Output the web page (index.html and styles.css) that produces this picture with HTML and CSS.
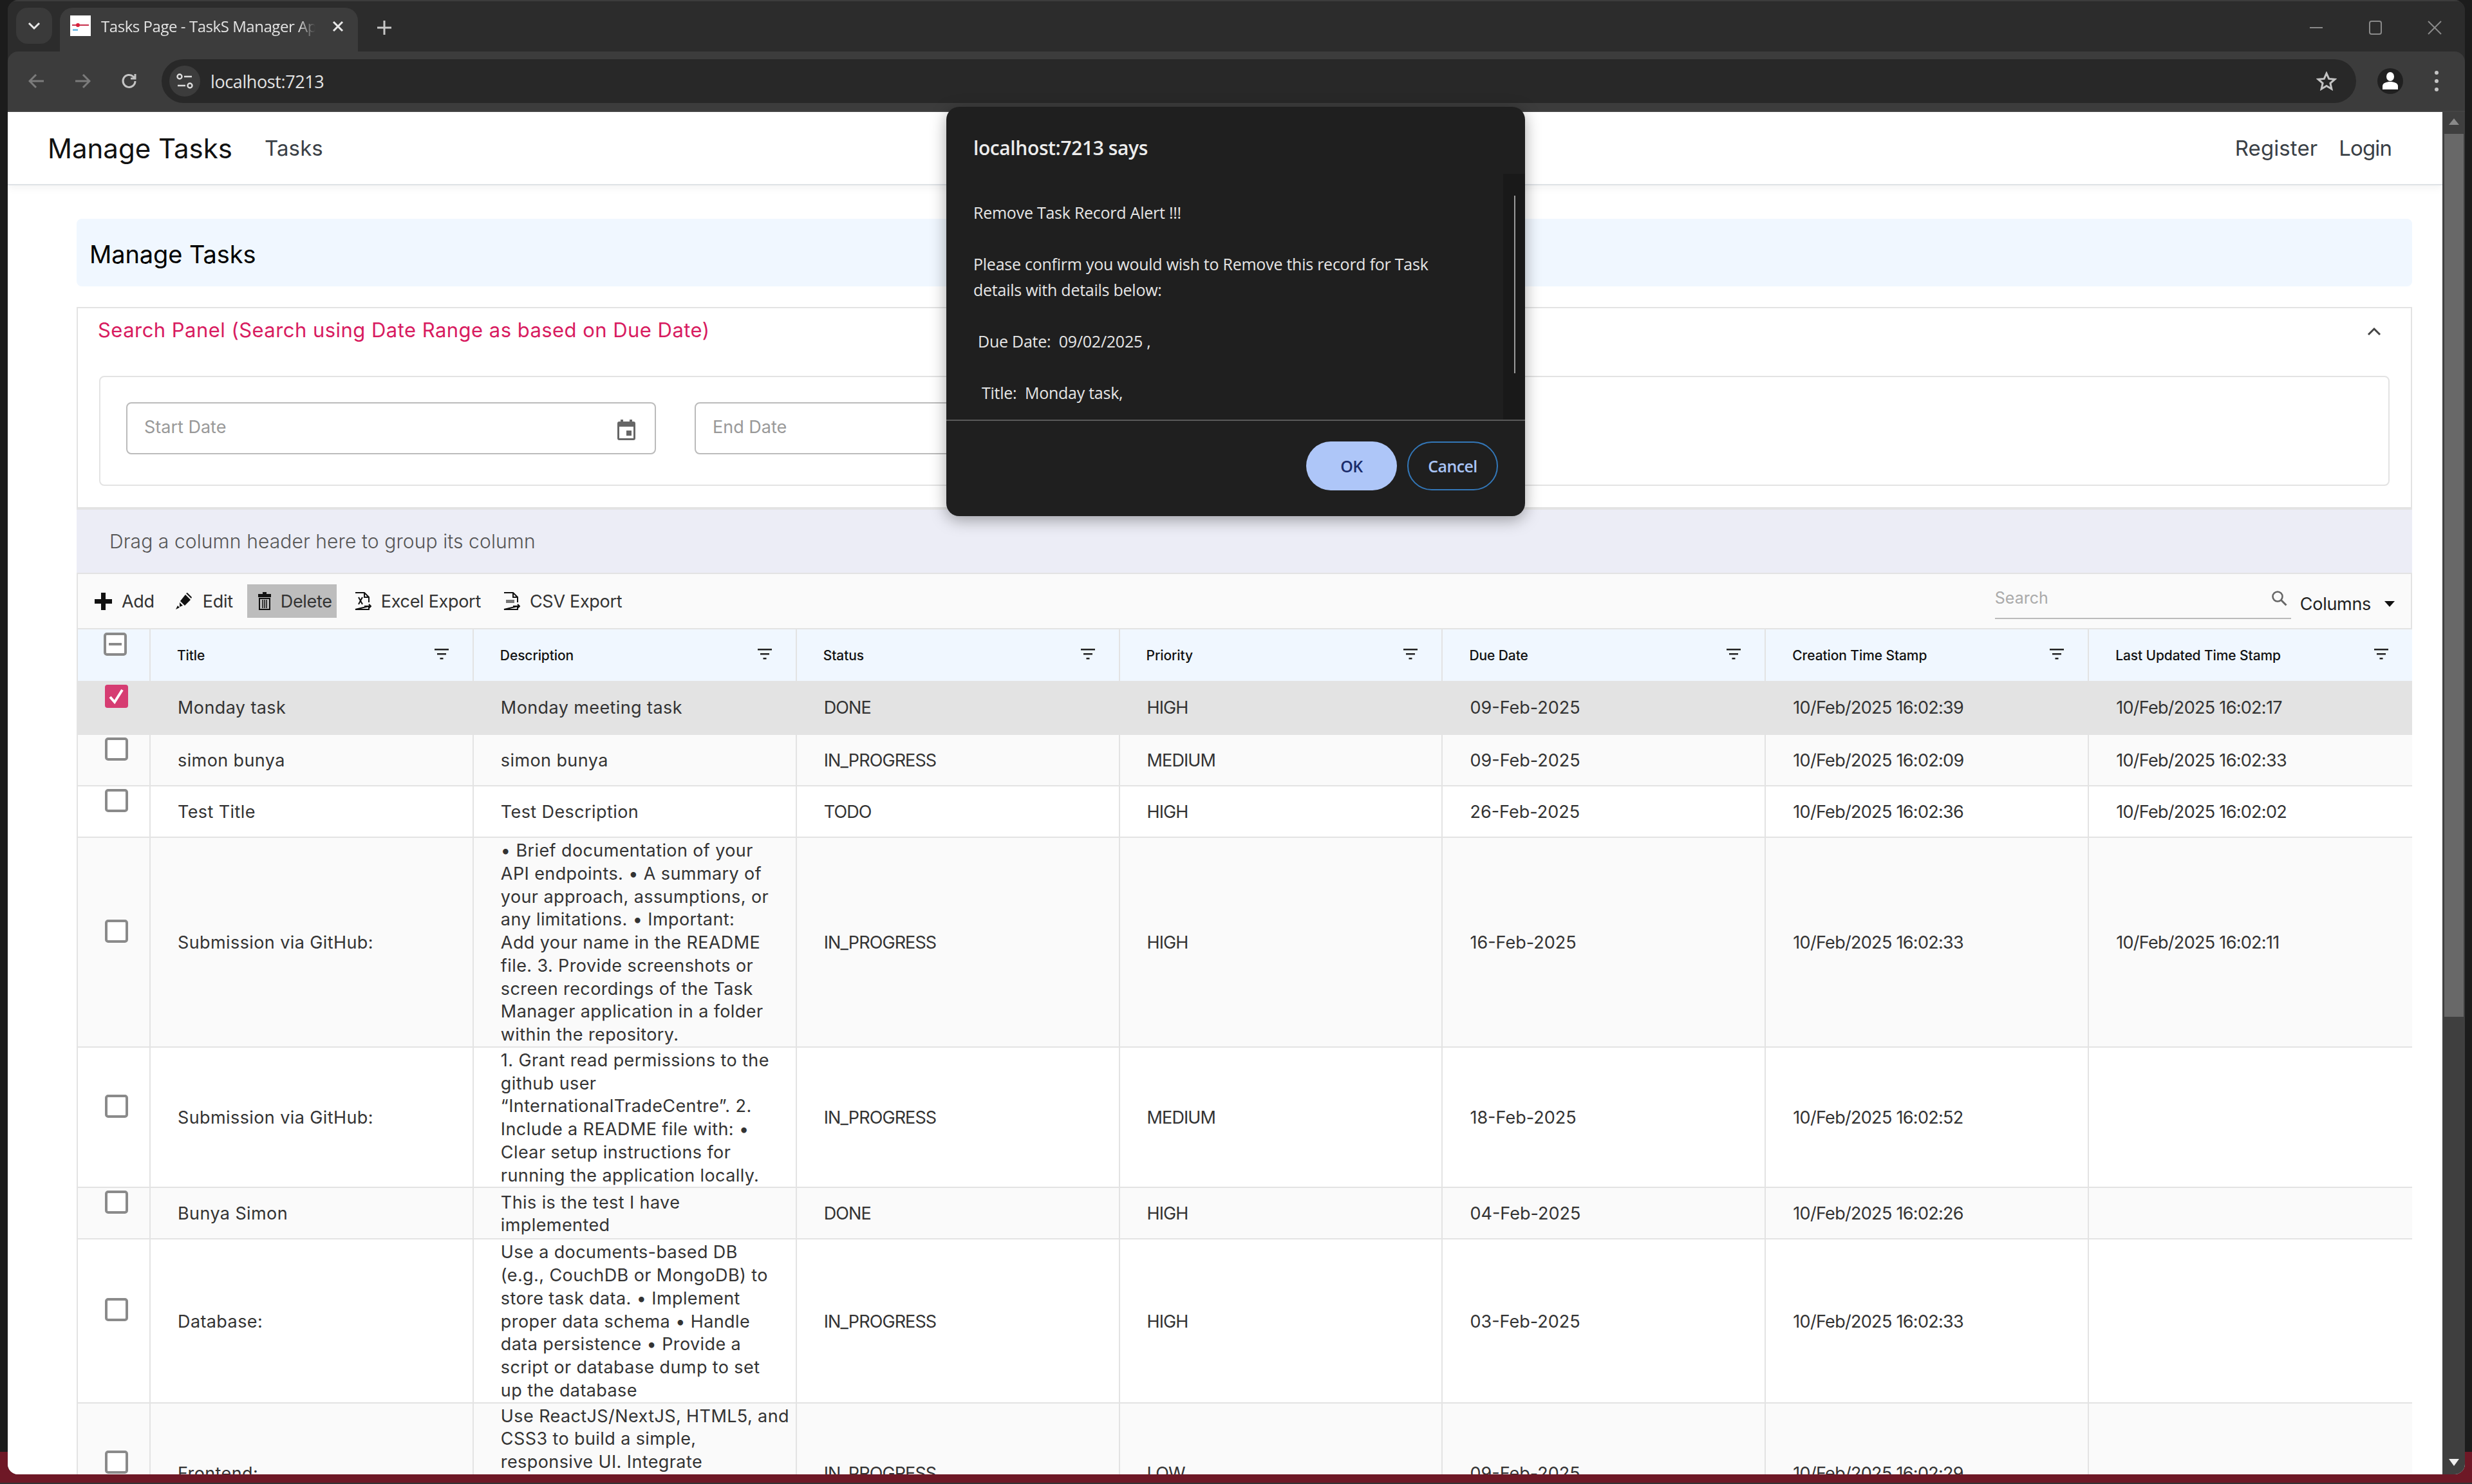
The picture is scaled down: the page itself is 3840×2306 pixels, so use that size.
FILE: index.html
```html
<!DOCTYPE html>
<html lang="en">
<head>
<meta charset="utf-8">
<title>Tasks Page - TaskS Manager App</title>
<link rel="stylesheet" href="styles.css">
</head>
<body>
<svg class="defs" aria-hidden="true">
  <symbol id="filter" viewBox="0 0 22 22"><path d="M0 3h22v2.6H0zM4 10h14v2.6H4zM8.500 17h5v2.600h-5z"/></symbol>
  <symbol id="box" viewBox="0 0 36 36"><rect x="2" y="2" width="32" height="32" rx="3" fill="#fff" stroke="#8a8a8a" stroke-width="4"/></symbol>
</svg>
<div class="screen">
  <div class="window">
    <header class="chrome">
      <div class="tabstrip">
        <button class="tabsearch"><svg width="20" height="14" viewBox="0 0 20 14"><path d="M2 3l8 8 8-8" fill="none" stroke="#e8e8e8" stroke-width="3"/></svg></button>
        <div class="tab">
          <span class="favicon"><svg width="32" height="32" viewBox="0 0 32 32"><rect width="32" height="32" fill="#fff"/><rect x="3" y="14" width="26" height="2" fill="#c8304c"/><circle cx="12" cy="15" r="3" fill="#d8203c"/><rect x="4" y="21" width="8" height="3" fill="#7cc0e8"/></svg></span>
          <span class="tabtitle">Tasks Page - TaskS Manager App</span>
          <svg class="tabclose" width="18" height="18" viewBox="0 0 18 18"><path d="M2 2l14 14M16 2L2 16" stroke="#e8e8e8" stroke-width="3"/></svg>
        </div>
        <svg class="newtab" width="22" height="22" viewBox="0 0 22 22"><path d="M11 0v22M0 11h22" stroke="#c8c8c8" stroke-width="3"/></svg>
        <div class="winctl">
          <svg width="22" height="22" viewBox="0 0 22 22"><path d="M1 11h20" stroke="#8a8a8a" stroke-width="2"/></svg>
          <svg width="22" height="22" viewBox="0 0 22 22"><rect x="2" y="1" width="18" height="20" rx="3" fill="none" stroke="#8a8a8a" stroke-width="2"/></svg>
          <svg width="22" height="22" viewBox="0 0 22 22"><path d="M1 1l20 20M21 1L1 21" stroke="#8a8a8a" stroke-width="2"/></svg>
        </div>
      </div>
      <div class="toolbar">
        <svg class="navicon" width="26" height="26" viewBox="0 0 26 26"><path d="M24 13H3M12 3L2 13l10 10" fill="none" stroke="#7b7b7b" stroke-width="3"/></svg>
        <svg class="navicon" width="26" height="26" viewBox="0 0 26 26"><path d="M2 13h21M14 3l10 10-10 10" fill="none" stroke="#7b7b7b" stroke-width="3"/></svg>
        <svg class="navicon" width="26" height="26" viewBox="0 0 26 26"><path d="M22 13a9.500 9.500 0 1 1-3-7l3 3M22 2v7h-7" fill="none" stroke="#c4c4c4" stroke-width="3"/></svg>
        <div class="omnibox">
          <span class="siteinfo"><svg width="26" height="26" viewBox="0 0 26 26"><circle cx="5" cy="6" r="3.500" fill="none" stroke="#dcdcdc" stroke-width="2.400"/><path d="M12 6h12M2 20h12" stroke="#dcdcdc" stroke-width="2.400"/><circle cx="21" cy="20" r="3.500" fill="none" stroke="#dcdcdc" stroke-width="2.400"/></svg></span>
          <span class="url">localhost:7213</span>
          <svg class="star" width="32" height="30" viewBox="0 0 32 30"><path d="M16 3l3.700 8.400 9 .9-6.800 6 2 8.900-7.900-4.700-7.900 4.700 2-8.900-6.800-6 9-.9z" fill="none" stroke="#c4c4c4" stroke-width="3"/></svg>
        </div>
        <span class="avatar"><svg width="26" height="30" viewBox="0 0 26 30"><ellipse cx="13" cy="8" rx="6" ry="7" fill="#fff"/><path d="M1 28v-5c0-5 6-7 12-7s12 2 12 7v5z" fill="#fff"/></svg></span>
        <svg class="kebab" width="8" height="34" viewBox="0 0 8 34"><circle cx="4" cy="4" r="3" fill="#c4c4c4"/><circle cx="4" cy="17" r="3" fill="#c4c4c4"/><circle cx="4" cy="30" r="3" fill="#c4c4c4"/></svg>
      </div>
    </header>

    <div class="viewport">
      <div class="page">
        <nav class="navbar">
          <div class="navleft"><a class="brand">Manage Tasks</a><a class="navlink">Tasks</a></div>
          <div class="navright"><a class="navlink">Register</a><a class="navlink login">Login</a></div>
        </nav>
        <main class="main">
          <div class="pagehead"><h1>Manage Tasks</h1></div>
          <section class="panel">
            <div class="panelhead">
              <span class="paneltitle">Search Panel (Search using Date Range as based on Due Date)</span>
              <svg width="24" height="14" viewBox="0 0 24 14"><path d="M3 12l9-9 9 9" fill="none" stroke="#444" stroke-width="3"/></svg>
            </div>
            <div class="panelcard">
              <div class="datefield"><span>Start Date</span>
                <svg width="28" height="32" viewBox="0 0 28 32"><path d="M5 0h4v3h10V0h4v3h2a3 3 0 0 1 3 3v23a3 3 0 0 1-3 3H3a3 3 0 0 1-3-3V6a3 3 0 0 1 3-3h2zM3 11v18h22V11z" fill="#666"/><rect x="14" y="17" width="8" height="8" fill="#666"/></svg>
              </div>
              <div class="datefield"><span>End Date</span></div>
            </div>
          </section>
          <section class="grid">
            <div class="groupbar">Drag a column header here to group its column</div>
            <div class="gridtools">
              <button class="tool first"><svg width="27" height="27" viewBox="0 0 27 27"><path d="M10 0h7v10h10v7H17v10h-7V17H0v-7h10z" fill="#111"/></svg>Add</button>
              <button class="tool"><svg width="28" height="28" viewBox="0 0 28 28"><path d="M16 4l8 8-9 9-7-7zM19 1l7 7-1 2-8-8zM7 16l5 5-5 2z" fill="#111"/><path d="M1 27l3-6 3 3z" fill="#111"/></svg>Edit</button>
              <button class="tool active"><svg width="20" height="28" viewBox="0 0 20 28"><path d="M7 0h6v3h7v5H0V3h7z" fill="#111"/><path d="M2 10h16v17H2z" fill="none" stroke="#111" stroke-width="2"/><path d="M7 12v13M10 12v13M13 12v13" stroke="#111" stroke-width="1.500"/></svg>Delete</button>
              <button class="tool"><svg width="26" height="28" viewBox="0 0 26 28"><path d="M1 1h14l7 7v8M22 22v5H1z" fill="none" stroke="#111" stroke-width="2"/><path d="M15 1v7h7M6 8l6 11M12 8L6 19M15 22h10M22 19l3 3-3 3" fill="none" stroke="#111" stroke-width="2"/></svg>Excel Export</button>
              <button class="tool"><svg width="26" height="28" viewBox="0 0 26 28"><path d="M1 1h14l7 7v8M22 22v5H1z" fill="none" stroke="#111" stroke-width="2"/><path d="M15 1v7h7M15 22h10M22 19l3 3-3 3" fill="none" stroke="#111" stroke-width="2"/><rect x="4" y="12" width="13" height="5" fill="#777"/></svg>CSV Export</button>
              <div class="toolright">
                <div class="gridsearch"><span>Search</span>
                  <svg width="25" height="25" viewBox="0 0 25 25"><circle cx="10" cy="10" r="7.500" fill="none" stroke="#666" stroke-width="2.600"/><path d="M15.500 15.500l8 8" stroke="#666" stroke-width="3"/></svg>
                </div>
                <div class="columnsbtn">Columns<i class="caret"></i></div>
              </div>
            </div>
            <table class="tasks">
              <colgroup><col class="c0"><col class="cn"><col class="cn"><col class="cn"><col class="cn"><col class="cn"><col class="cn"><col class="cn"></colgroup>
              <thead>
                <tr>
                  <th class="check"><svg class="cb" width="36" height="36"><use href="#box"/><path d="M8 18h20" stroke="#8a8a8a" stroke-width="4"/></svg></th>
                  <th><div class="th">Title<svg class="fi" width="22" height="22"><use href="#filter"/></svg></div></th>
                  <th><div class="th">Description<svg class="fi" width="22" height="22"><use href="#filter"/></svg></div></th>
                  <th><div class="th">Status<svg class="fi" width="22" height="22"><use href="#filter"/></svg></div></th>
                  <th><div class="th">Priority<svg class="fi" width="22" height="22"><use href="#filter"/></svg></div></th>
                  <th><div class="th">Due Date<svg class="fi" width="22" height="22"><use href="#filter"/></svg></div></th>
                  <th><div class="th">Creation Time Stamp<svg class="fi" width="22" height="22"><use href="#filter"/></svg></div></th>
                  <th><div class="th">Last Updated Time Stamp<svg class="fi" width="22" height="22"><use href="#filter"/></svg></div></th>
                </tr>
              </thead>
              <tbody>
                <tr class="selected">
                  <td class="check"><svg class="cb" width="36" height="36" viewBox="0 0 36 36"><rect width="36" height="36" rx="4" fill="#d63d72"/><path d="M8 19l7 8L27 8" fill="none" stroke="#fff" stroke-width="4"/></svg></td>
                  <td>Monday task</td><td>Monday meeting task</td><td>DONE</td><td>HIGH</td><td>09-Feb-2025</td><td>10/Feb/2025 16:02:39</td><td>10/Feb/2025 16:02:17</td>
                </tr>
                <tr>
                  <td class="check"><svg class="cb" width="36" height="36"><use href="#box"/></svg></td>
                  <td>simon bunya</td><td>simon bunya</td><td>IN_PROGRESS</td><td>MEDIUM</td><td>09-Feb-2025</td><td>10/Feb/2025 16:02:09</td><td>10/Feb/2025 16:02:33</td>
                </tr>
                <tr>
                  <td class="check"><svg class="cb" width="36" height="36"><use href="#box"/></svg></td>
                  <td>Test Title</td><td>Test Description</td><td>TODO</td><td>HIGH</td><td>26-Feb-2025</td><td>10/Feb/2025 16:02:36</td><td>10/Feb/2025 16:02:02</td>
                </tr>
                <tr>
                  <td class="check"><svg class="cb" width="36" height="36"><use href="#box"/></svg></td>
                  <td>Submission via GitHub:</td>
                  <td>• Brief documentation of your<br>API endpoints. • A summary of<br>your approach, assumptions, or<br>any limitations. • Important:<br>Add your name in the README<br>file. 3. Provide screenshots or<br>screen recordings of the Task<br>Manager application in a folder<br>within the repository.</td>
                  <td>IN_PROGRESS</td><td>HIGH</td><td>16-Feb-2025</td><td>10/Feb/2025 16:02:33</td><td>10/Feb/2025 16:02:11</td>
                </tr>
                <tr>
                  <td class="check"><svg class="cb" width="36" height="36"><use href="#box"/></svg></td>
                  <td>Submission via GitHub:</td>
                  <td>1. Grant read permissions to the<br>github user<br>“InternationalTradeCentre”. 2.<br>Include a README file with: •<br>Clear setup instructions for<br>running the application locally.</td>
                  <td>IN_PROGRESS</td><td>MEDIUM</td><td>18-Feb-2025</td><td>10/Feb/2025 16:02:52</td><td></td>
                </tr>
                <tr>
                  <td class="check"><svg class="cb" width="36" height="36"><use href="#box"/></svg></td>
                  <td>Bunya Simon</td><td>This is the test I have<br>implemented</td><td>DONE</td><td>HIGH</td><td>04-Feb-2025</td><td>10/Feb/2025 16:02:26</td><td></td>
                </tr>
                <tr>
                  <td class="check"><svg class="cb" width="36" height="36"><use href="#box"/></svg></td>
                  <td>Database:</td>
                  <td>Use a documents-based DB<br>(e.g., CouchDB or MongoDB) to<br>store task data. • Implement<br>proper data schema • Handle<br>data persistence • Provide a<br>script or database dump to set<br>up the database</td>
                  <td>IN_PROGRESS</td><td>HIGH</td><td>03-Feb-2025</td><td>10/Feb/2025 16:02:33</td><td></td>
                </tr>
                <tr>
                  <td class="check"><svg class="cb" width="36" height="36"><use href="#box"/></svg></td>
                  <td>Frontend:</td>
                  <td>Use ReactJS/NextJS, HTML5, and<br>CSS3 to build a simple,<br>responsive UI. Integrate<br>with the backend API to<br>manage tasks and display<br>their details.</td>
                  <td>IN_PROGRESS</td><td>LOW</td><td>09-Feb-2025</td><td>10/Feb/2025 16:02:29</td><td></td>
                </tr>
              </tbody>
            </table>
          </section>
        </main>
      </div>
      <div class="scrollbar">
        <i class="arrow up"></i>
        <div class="thumb"></div>
        <i class="arrow down"></i>
      </div>
    </div>
  </div>
</div>

<div class="dialog" role="dialog">
  <div class="dlgtitle">localhost:7213 says</div>
  <div class="dlgbody">
    <div class="dlgtext">
      <p>Remove Task Record Alert !!!</p>
      <p>Please confirm you would wish to Remove this record for Task<br>details with details below:</p>
      <p class="due">Due Date:&nbsp; 09/02/2025 ,</p>
      <p class="ttl">Title:&nbsp; Monday task,</p>
    </div>
    <div class="dlgscroll"><i></i></div>
  </div>
  <div class="dlgfoot">
    <button class="btn ok">OK</button>
    <button class="btn cancel">Cancel</button>
  </div>
</div>
</body>
</html>
```

FILE: styles.css
```css
* { box-sizing: border-box; }
html, body { margin: 0; padding: 0; height: 2306px; overflow: hidden; }
body { font-family: "Inter", "Liberation Sans", sans-serif; color: #333; background: #1c1c1c; position: relative; }
.defs { position: absolute; width: 0; height: 0; }
button { font: inherit; border: 0; background: none; color: inherit; padding: 0; }
h1, p { margin: 0; }

.screen { height: 2306px; padding: 0 11px 15px 12px; background: linear-gradient(#1c1c1c 2256px, #6e1826 2256px, #6e1826 2304px, #333 2304px); }
.window { height: 2291px; display: flex; flex-direction: column; border-radius: 16px; overflow: hidden; background: #2c2c2c; }

.chrome { height: 174px; flex: none; font-family: "Open Sans", "Noto Sans", sans-serif; border-top: 2px solid #3c3c3c; }
.tabstrip { height: 78px; display: flex; align-items: flex-start; padding: 10px 0 0 13px; background: #2c2c2c; }
.tabsearch { width: 56px; height: 56px; border-radius: 18px; background: #3a3a3a; display: flex; align-items: center; justify-content: center; margin-right: 12px; }
.tab { width: 463px; height: 68px; background: #3c3c3c; border-radius: 20px 20px 0 0; display: flex; align-items: flex-start; padding: 12px 0 0 16px; position: relative; }
.favicon { width: 32px; height: 32px; display: block; flex: none; }
.favicon svg { display: block; }
.tabtitle { width: 333px; margin-left: 16px; font-size: 24px; line-height: 34px; color: #e3e3e3; white-space: nowrap; overflow: hidden; letter-spacing: -0.45px; -webkit-mask-image: linear-gradient(to right, #000 92%, transparent); mask-image: linear-gradient(to right, #000 92%, transparent); }
.tabclose { margin: 8px 0 0 26px; }
.newtab { margin: 20px 0 0 30px; }
.winctl { margin-left: auto; display: flex; gap: 70px; padding: 20px 36px 0 0; }
.toolbar { height: 94px; display: flex; align-items: center; background: #3c3c3c; border-bottom: 2px solid #444; border-radius: 16px 16px 0 0; padding-left: 32px; }
.navicon { margin-right: 45px; flex: none; }
.navicon:nth-child(2) { margin-right: 47px; }
.navicon:nth-child(3) { margin-right: 37px; }
.omnibox { width: 3409px; height: 68px; border-radius: 34px; background: #282828; display: flex; align-items: center; padding: 0 30px 0 12px; flex: none; }
.siteinfo { width: 48px; height: 48px; border-radius: 50%; background: #3c3c3c; display: flex; align-items: center; justify-content: center; flex: none; }
.url { margin-left: 16px; font-size: 27px; letter-spacing: -0.4px; color: #e3e3e3; }
.star { margin-left: auto; }
.avatar { width: 40px; height: 40px; border-radius: 50%; background: #202020; margin: 0 0 0 33px; display: flex; align-items: flex-end; justify-content: center; flex: none; padding-bottom: 5px; }
.kebab { margin: 0 0 0 48px; flex: none; }

.viewport { flex: 1; min-height: 0; display: flex; background: #fff; }
.page { flex: 1; min-width: 0; overflow: hidden; background: #fff; border-bottom-left-radius: 14px; }
.scrollbar { width: 35px; flex: none; background: #3f3f3f; display: flex; flex-direction: column; align-items: center; padding: 10px 0 7px; border-bottom-right-radius: 14px; }
.thumb { width: 30px; height: 1372px; background: #686868; margin-top: 14px; }
.arrow { width: 0; height: 0; border-left: 8px solid transparent; border-right: 8px solid transparent; display: block; }
.arrow.up { border-bottom: 10px solid #8a8a8a; }
.arrow.down { border-top: 11px solid #f0f0f0; margin-top: auto; margin-bottom: 6px; }

.navbar { height: 114px; display: flex; align-items: center; justify-content: space-between; padding: 0 79px 0 62px; border-bottom: 2px solid #dee2e6; box-shadow: 0 4px 12px rgba(0,0,0,.05); background: #fff; position: relative; }
.navleft, .navright { display: flex; align-items: center; }
.brand { font-size: 42px; color: #111; letter-spacing: 0; margin-right: 50px; }
.navlink { font-size: 33px; color: #3a4046; letter-spacing: 0.1px; }
.navlink.login { letter-spacing: -0.9px; }
.navright { gap: 33px; }

.main { padding: 52px 47px 0 107px; }
.pagehead { height: 105px; background: #f0f7ff; border-radius: 8px; display: flex; align-items: center; padding-left: 20px; }
.pagehead h1 { font-size: 38px; font-weight: 400; color: #000; letter-spacing: -0.1px; margin-top: 5px; }

.panel { margin-top: 32px; border: 2px solid #e3e3e3; border-bottom: 0; padding-bottom: 33px; }
.panelhead { height: 105px; display: flex; align-items: flex-start; justify-content: space-between; padding: 14px 45px 0 31px; }
.panelhead svg { margin-top: 15px; }
.paneltitle { font-size: 31px; line-height: 40px; color: #d81b60; letter-spacing: 0.46px; }
.panelcard { margin: 0 33px; height: 171px; border: 2px solid #e3e3e3; border-radius: 8px; padding: 39px 40px; display: flex; gap: 60px; }
.datefield { width: 823px; height: 81px; border: 2px solid #bbb; border-radius: 8px; display: flex; align-items: center; justify-content: space-between; padding: 0 30px 0 26px; font-size: 27px; color: #999; }
.datefield span { margin-top: -5px; }
.datefield svg { margin-top: 4px; }

.grid { border: 2px solid #e3e3e3; border-top: 0; border-bottom: 0; }
.groupbar { height: 104px; border-top: 4px solid #e3e3e3; border-bottom: 2px solid #e3e3e3; background: #ecedf6; display: flex; align-items: center; padding-left: 51px; font-size: 30px; font-weight: 300; color: #555; letter-spacing: 0.1px; margin: 0 -2px; }
.gridtools { height: 86px; background: #fafafa; border-bottom: 2px solid #e3e3e3; display: flex; align-items: center; padding-left: 9px; gap: 11px; }
.tool { height: 52px; display: flex; align-items: center; gap: 15px; padding: 0 7px 0 17px; font-size: 27px; color: #333; letter-spacing: -0.3px; }
.tool.first { margin-right: -3px; }
.tool.active { background: #bdbdbd; margin-left: 4px; }
.toolright { margin: -12px 0 0 auto; display: flex; align-items: flex-end; padding-right: 25px; gap: 14px; }
.gridsearch { width: 460px; height: 68px; border-bottom: 2px solid #bbb; display: flex; align-items: flex-start; justify-content: space-between; padding: 20px 6px 0 0; font-size: 25px; color: #aaa; }
.gridsearch svg { margin-top: 3px; }
.columnsbtn { font-size: 27px; color: #222; display: flex; align-items: center; gap: 21px; letter-spacing: -0.3px; height: 60px; margin-bottom: -6px; }
.caret { width: 0; height: 0; border-left: 8px solid transparent; border-right: 8px solid transparent; border-top: 9px solid #111; display: block; }

.tasks { width: 3626px; table-layout: fixed; border-collapse: separate; border-spacing: 0; }
.c0 { width: 113px; }
.cn { width: 501.860px; }
.tasks th { height: 80px; background: #f0f7ff; border-right: 2px solid #e3e3e3; padding: 0 37px 0 41px; text-align: left; font-size: 21px; font-weight: 500; color: #111; vertical-align: middle; }
.tasks th:last-child, .tasks td:last-child { border-right: 0; }
.th { display: flex; align-items: center; justify-content: space-between; letter-spacing: -0.1px; }
.fi { fill: #222; margin-top: -4px; flex: none; }
.tasks td { height: 80px; padding: 2px 20px 0 42px; font-size: 27px; line-height: 35.750px; color: #333; letter-spacing: 0.4px; border-right: 2px solid #e3e3e3; border-bottom: 2px solid #e3e3e3; white-space: nowrap; vertical-align: middle; background: #fff; font-weight: 400; }
.tasks td:nth-child(4), .tasks td:nth-child(5) { letter-spacing: -0.9px; }
.tasks td:nth-child(6) { letter-spacing: 0; }
.tasks td:nth-child(7), .tasks td:nth-child(8) { letter-spacing: -0.7px; }
.tasks tbody tr:nth-child(even) td { background: #fafafa; }
.tasks tbody tr.selected td { background: #e3e3e3; height: 84px; }
.tasks .check { padding: 0 0 34px 8px; text-align: center; }
.tasks th.check { padding: 0 0 34px 4px; }
.cb { display: block; margin: 0 auto; }

.dialog { position: absolute; left: 1470px; top: 166px; width: 899px; height: 636px; background: #1f1f1f; border-radius: 20px; box-shadow: 0 6px 24px rgba(0,0,0,.35); display: flex; flex-direction: column; font-family: "Open Sans", "Noto Sans", sans-serif; color: #e6e6e6; }
.dlgtitle { height: 104px; padding: 42px 0 0 42px; font-size: 30px; line-height: 44px; font-weight: 600; letter-spacing: -0.4px; color: #ececec; }
.dlgbody { height: 382px; display: flex; }
.dlgtext { flex: 1; padding: 40px 0 0 42px; font-size: 25px; line-height: 40px; letter-spacing: -0.25px; overflow: hidden; }
.dlgtext p { margin-bottom: 40px; }
.dlgtext .due { padding-left: 7px; }
.dlgtext .ttl { padding-left: 13px; }
.dlgscroll { width: 34px; background: #191919; padding: 34px 0 0 17px; }
.dlgscroll i { display: block; width: 2px; height: 276px; background: #9a9a9a; }
.dlgfoot { flex: 1; border-top: 2px solid #5a5a5a; display: flex; justify-content: flex-end; gap: 16px; padding: 32px 42px 0 0; }
.btn { width: 141px; height: 76px; border-radius: 38px; font-size: 25px; font-weight: 600; letter-spacing: -0.6px; }
.ok { background: #aec6f8; color: #1b2c6b; }
.cancel { border: 2px solid #3377b8; color: #a9c4f5; }
```
